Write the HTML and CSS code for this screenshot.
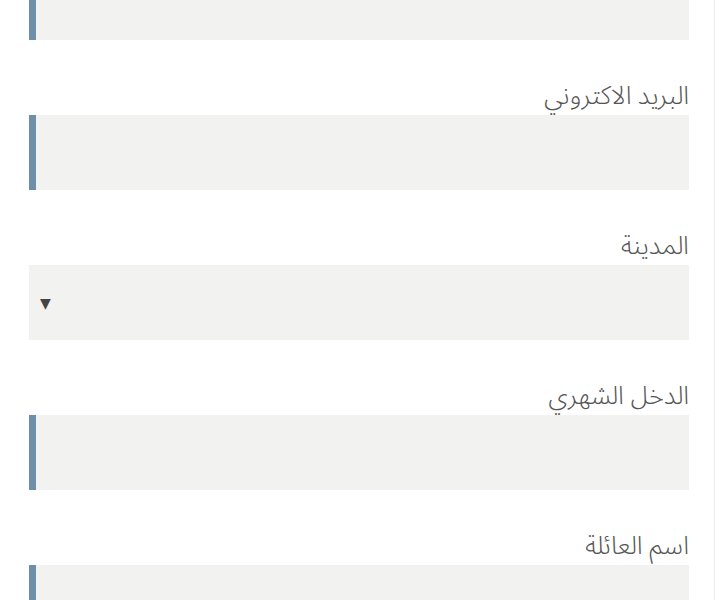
FILE: index.html
```html
<!DOCTYPE html>
<html lang="ar" dir="rtl">
<head>
<meta charset="utf-8">
<link rel="stylesheet" href="styles.css">
</head>
<body>
<div class="page">
  <form class="form">
    <div class="field field-first">
      <div class="input"></div>
    </div>
    <div class="field">
      <label class="label">البريد الاكتروني</label>
      <div class="input"></div>
    </div>
    <div class="field">
      <label class="label">المدينة</label>
      <div class="select"><span class="arrow">▼</span></div>
    </div>
    <div class="field">
      <label class="label">الدخل الشهري</label>
      <div class="input"></div>
    </div>
    <div class="field">
      <label class="label">اسم العائلة</label>
      <div class="input"></div>
    </div>
  </form>
</div>
</body>
</html>
```
FILE: styles.css
```css
html, body {
  margin: 0;
  padding: 0;
  background: #fff;
  overflow: hidden;
}
.page {
  width: 715px;
  height: 600px;
  margin-left: 0;
  margin-right: auto;
  border-right: 1px solid #ececec;
  box-sizing: border-box;
  overflow: hidden;
}
.form {
  display: flex;
  flex-direction: column;
  padding: 0 25px 0 29px;
  margin-top: -35px;
}
.field {
  display: flex;
  flex-direction: column;
  margin-bottom: 40px;
}
.label {
  font-family: "Noto Sans Arabic", "DejaVu Sans", sans-serif;
  font-size: 25.5px;
  font-weight: 300;
  line-height: 32px;
  color: #555;
  margin-bottom: 3px;
}
.input {
  height: 75px;
  background: #f2f2f0;
  border-left: 7px solid #6e8fa9;
}
.select {
  height: 75px;
  background: #f2f2f0;
  display: flex;
  align-items: center;
  justify-content: flex-end;
  padding-left: 11px;
}
.arrow {
  font-family: "DejaVu Sans", sans-serif;
  font-size: 14px;
  color: #444;
}
```
